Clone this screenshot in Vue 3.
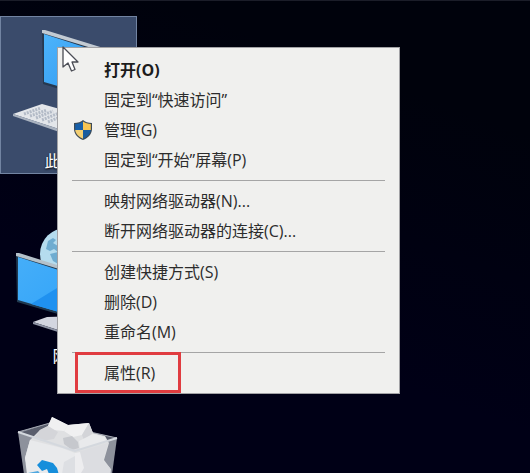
<script setup>
import { ref } from 'vue'

const selected = ref('pc')

const icons = [
    { id: 'pc', label: '此电脑' },
    { id: 'network', label: '网络' },
    { id: 'bin' }
]

// Groups are split by a separator line
const groups = [
    [
        { text: '打开(O)', bold: true },
        { text: '固定到“快速访问”' },
        { text: '管理(G)', shield: true },
        { text: '固定到“开始”屏幕(P)' }
    ],
    [
        { text: '映射网络驱动器(N)...' },
        { text: '断开网络驱动器的连接(C)...' }
    ],
    [
        { text: '创建快捷方式(S)' },
        { text: '删除(D)' },
        { text: '重命名(M)' }
    ],
    [
        { text: '属性(R)', marked: true }
    ]
]
</script>

<template>
    <main class="desktop">
        <div class="icons">
            <button
                v-for="icon in icons"
                :key="icon.id"
                class="tile"
                :class="{ selected: selected === icon.id }"
                @click="selected = icon.id"
            >
                <svg v-if="icon.id === 'pc'" viewBox="1 1 135 132" aria-hidden="true">
                    <defs>
                        <linearGradient id="pcScreen" x1="0" y1="0" x2="1" y2="1">
                            <stop offset="0" stop-color="#4db4fb" />
                            <stop offset="1" stop-color="#2a93ee" />
                        </linearGradient>
                    </defs>
                    <path d="M42 14 L108 35 V88 L43 68 Z" fill="#26384f" />
                    <path d="M44 18 L106 38 V84 L44 66 Z" fill="url(#pcScreen)" />
                    <path d="M42 14 L45 14 L110 34 L108 37 L42 17 Z" fill="#c3cbd3" />
                    <path d="M13 98 L42 88 L92 102 L68 116 Z" fill="#e3e6ea" />
                    <path d="M13 98 L68 116 L68 119 L13 100 Z" fill="#a9b2bf" />
                    <path d="M24 98 L41 92 M30 100 L47 94 M36 102 L53 95 M42 104 L59 97 M48 106 L65 99" stroke="#b3bbc7" stroke-width="3" stroke-dasharray="2 1" />
                </svg>

                <svg v-else-if="icon.id === 'network'" viewBox="1 1 135 132" aria-hidden="true">
                    <defs>
                        <linearGradient id="netScreen" x1="0" y1="0" x2="1" y2="1">
                            <stop offset="0" stop-color="#45aef9" />
                            <stop offset="1" stop-color="#2fa2f9" />
                        </linearGradient>
                    </defs>
                    <circle cx="66" cy="43" r="26" fill="#b5dcee" />
                    <path d="M46 38 L48 30 L53 27 L56 29 L53 32 L58 35 V41 L54 38 L50 40 Z" fill="#6facd0" />
                    <path d="M50 43 L58 41 L64 47 L60 54 L53 50 Z" fill="#6facd0" />
                    <path d="M16 42 L92 66 V113 L17 91 Z" fill="#20394f" />
                    <path d="M18 46 L90 69 V110 L18 89 Z" fill="url(#netScreen)" />
                    <path d="M31 93 L62 74 L90 82 V110 Z" fill="#1f91f0" />
                    <path d="M16 42 L19 42 L92 65 V68 L16 45 Z" fill="#b4c1ca" />
                    <path d="M33 111 L47 106 L80 105 V126 L58 119 Z" fill="#d3d6e0" />
                    <path d="M33 111 L58 119 V121 L33 113 Z" fill="#8e94a5" />
                </svg>

                <svg v-else viewBox="1 1 135 132" aria-hidden="true">
                    <path d="M18 26 L50 17 L117 32 L106 112 L75 124 L30 110 Z" fill="#8d919c" />
                    <path d="M19 27 L50 17 L116 32 L75 45 Z" fill="#5a5e6d" />
                    <path d="M18 26 L50 17 L117 32" fill="none" stroke="#a3a7b1" stroke-width="1" />
                    <path d="M30 34 L40 24 L48 20 L52 11 L68 19 L89 17 L93 27 L105 30 L109 37 L104 54 L110 62 L102 80 L76 90 L30 76 L25 52 Z" fill="#dfe0e2" />
                    <path d="M48 20 L52 11 L68 19 L64 25 L54 24 Z" fill="#f0f0f1" />
                    <path d="M40 24 L48 20 L58 26 L54 33 L42 35 L34 32 Z" fill="#d4d5d9" />
                    <path d="M68 19 L89 17 L82 29 L73 31 L64 25 Z" fill="#f0f0f1" />
                    <path d="M89 17 L93 27 L84 34 L82 29 Z" fill="#d3d4d8" />
                    <path d="M63 32 L72 30 L78 36 L79 42 L72 44 L64 38 Z" fill="#c6c8cd" />
                    <path d="M79 35 L93 28 L105 31 L107 36 L80 43 Z" fill="#e9eaec" />
                    <path d="M30 34 L62 42 L75 47 V124 L32 110 L25 52 Z" fill="#e9eaec" />
                    <path d="M75 47 L108 37 L103 55 L111 63 L106 112 L75 124 Z" fill="#dcdde1" />
                    <path d="M75 47 L80 46 L84 62 L78 72 L75 68 Z" fill="#ededef" />
                    <path d="M64 56 L75 50 V70 L62 68 Z" fill="#dddfe3" />
                    <path d="M18 26 L75 45 L117 32" fill="none" stroke="#d4d8de" stroke-width="2" />
                    <path d="M37 59 L42 54 L53 57 L57 62 L59 69 L49 68 L47 63 L42 65 Z" fill="#168edb" />
                    <path d="M28 67 L38 65 L44 72 L40 84 L31 80 Z" fill="#4fa8e0" />
                    <path d="M50 74 L60 70 L58 88 L46 86 Z" fill="#1684d0" />
                </svg>
                <span v-if="icon.label" class="tile-label">{{ icon.label }}</span>
            </button>
        </div>

        <div class="menu" role="menu">
            <div v-for="(group, i) in groups" :key="i" class="group" role="group">
                <button
                    v-for="item in group"
                    :key="item.text"
                    class="item"
                    :class="{ bold: item.bold, marked: item.marked }"
                    role="menuitem"
                >
                    <span class="item-icon">
                        <svg v-if="item.shield" class="shield" viewBox="0 0 18 20" aria-hidden="true">
                            <path d="M9 0 C11 2 14 3 18 3 V9 C18 14 14 18 9 20 C4 18 0 14 0 9 V3 C4 3 7 2 9 0 Z" fill="#3d4a55" />
                            <path d="M9 1.5 V10 H1.2 V4 C4 4 7 3 9 1.5 Z" fill="#175fa8" />
                            <path d="M9 1.5 C11 3 14 4 16.8 4 V10 H9 Z" fill="#f7c552" />
                            <path d="M1.2 10 H9 V18.7 C5 17 1.5 14 1.2 10 Z" fill="#f3cf73" />
                            <path d="M9 10 H16.8 C16.5 14 13 17 9 18.7 Z" fill="#1a5c9e" />
                        </svg>
                    </span>
                    <span>{{ item.text }}</span>
                </button>
            </div>
        </div>

        <svg class="cursor" viewBox="0 0 18 27" aria-hidden="true">
            <path d="M1 1 V21 L6 17 L9.500 25 L13 23.500 L10 16 H16 Z" fill="#fff" stroke="#4b4d55" stroke-width="1.300" stroke-linejoin="round" />
        </svg>
    </main>
</template>

<style>
body {
    margin: 0;
    background: #000014;
}
</style>

<style scoped>
.desktop {
    position: relative;
    height: 100vh;
    overflow: hidden;
    box-sizing: border-box;
    border-top: 1px solid #1b1d29;
    background: linear-gradient(200deg, #00020c 20%, #000016 65%);
    font-family: "Open Sans", "Noto Sans CJK SC", sans-serif;
    font-size: 16px;
}

.icons {
    display: flex;
    flex-direction: column;
    align-items: flex-start;
    gap: 37px;
    padding-top: 15px;
}

.tile {
    display: flex;
    flex-direction: column;
    align-items: center;
    flex-shrink: 0;
    width: 137px;
    padding: 0;
    border: 1px solid transparent;
    background: transparent;
    color: #fff;
    font: inherit;
}
.tile.selected {
    background: #3a4b6b;
    border-color: #7284a2;
}
.tile svg {
    display: block;
    width: 135px;
    height: 132px;
}
.tile-label {
    line-height: 24px;
    text-shadow: 0 1px 2px #000;
}

.menu {
    position: absolute;
    top: 46px;
    left: 57px;
    width: 343px;
    box-sizing: border-box;
    padding: 7px 0 5px;
    border: 1px solid #a2a2a5;
    background: #f0f0ee;
}

.group + .group::before {
    content: '';
    display: block;
    height: 1px;
    margin: 5px 14px;
    background: #a5a5a5;
}

.item {
    position: relative;
    display: grid;
    grid-template-columns: 30px 1fr;
    align-items: center;
    width: 100%;
    height: 30px;
    padding: 0 16px;
    border: 0;
    background: transparent;
    color: #2c2c2c;
    font: inherit;
    line-height: 30px;
    text-align: left;
    white-space: nowrap;
}
.item:hover { background: #fff; }
.item.bold {
    font-weight: 700;
    color: #1c1c1c;
}

/* Red frame around the entry to click */
.item.marked::after {
    content: '';
    position: absolute;
    top: -6px;
    left: 17px;
    width: 106px;
    height: 41px;
    box-sizing: border-box;
    border: 3px solid #e03c40;
}

.shield {
    display: block;
    width: 18px;
    height: 20px;
}

.cursor {
    position: absolute;
    top: 45px;
    left: 62px;
    width: 18px;
    height: 27px;
}
</style>
